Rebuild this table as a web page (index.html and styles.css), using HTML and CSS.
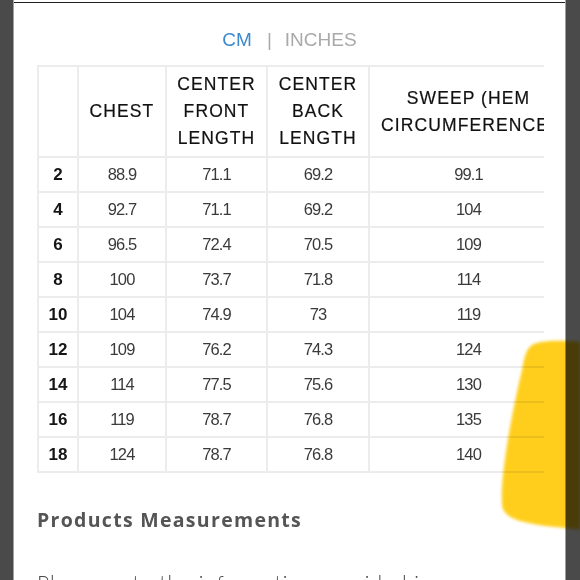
FILE: index.html
```html
<!DOCTYPE html>
<html>
<head>
<meta charset="utf-8">
<link rel="stylesheet" href="styles.css">
</head>
<body>
<div class="panel">
  <div class="topline"></div>
  <div class="units"><span class="cm">CM</span><span class="sep">|</span><span class="inches">INCHES</span></div>
  <div class="table-wrap">
    <table class="size-table">
      <colgroup>
        <col class="c0"><col class="c1"><col class="c2"><col class="c3"><col class="c4">
      </colgroup>
      <thead>
        <tr>
          <th></th>
          <th>CHEST</th>
          <th>CENTER<br>FRONT<br>LENGTH</th>
          <th>CENTER<br>BACK<br>LENGTH</th>
          <th>SWEEP (HEM<br>CIRCUMFERENCE)</th>
        </tr>
      </thead>
      <tbody>
        <tr><td class="size">2</td><td>88.9</td><td>71.1</td><td>69.2</td><td>99.1</td></tr>
        <tr><td class="size">4</td><td>92.7</td><td>71.1</td><td>69.2</td><td>104</td></tr>
        <tr><td class="size">6</td><td>96.5</td><td>72.4</td><td>70.5</td><td>109</td></tr>
        <tr><td class="size">8</td><td>100</td><td>73.7</td><td>71.8</td><td>114</td></tr>
        <tr><td class="size">10</td><td>104</td><td>74.9</td><td>73</td><td>119</td></tr>
        <tr><td class="size">12</td><td>109</td><td>76.2</td><td>74.3</td><td>124</td></tr>
        <tr><td class="size">14</td><td>114</td><td>77.5</td><td>75.6</td><td>130</td></tr>
        <tr><td class="size">16</td><td>119</td><td>78.7</td><td>76.8</td><td>135</td></tr>
        <tr><td class="size">18</td><td>124</td><td>78.7</td><td>76.8</td><td>140</td></tr>
      </tbody>
    </table>
  </div>
  <h2 class="heading">Products Measurements</h2>
  <p class="note">Please note the information provided is</p>
</div>
<svg class="highlight" width="90" height="210" viewBox="0 0 90 210">
  <path d="M40 17 C45 10 70 10 95 12 L95 200 L55 196 C30 192 13 188 12 175 C10 150 20 90 32 40 C34 28 36 20 40 17 Z" fill="#ffcc10"/>
</svg>
</body>
</html>
```
FILE: styles.css
```css
html, body {
  margin: 0;
  padding: 0;
  height: 580px;
  overflow: hidden;
}
body {
  background: #4a4a4a;
  position: relative;
}
.panel {
  margin: 0 15px 0 14px;
  background: #ffffff;
  height: 580px;
  box-shadow: -1px 0 0 #a0a0a0, 1px 0 0 #a0a0a0;
  overflow: hidden;
}
.topline {
  height: 2px;
  border-bottom: 1px solid #1e1e1e;
}
.units {
  padding-top: 25px;
  height: 24px;
  line-height: 24px;
  text-align: center;
  font-family: "Liberation Sans", Arial, sans-serif;
  font-size: 19px;
}
.cm { color: #3d89cc; }
.sep { color: #a9a9a9; margin: 0 13px 0 15px; }
.inches { color: #a9a9a9; }
.table-wrap {
  margin: 13px 0 0 23px;
  width: 507px;
  overflow: hidden;
}
.size-table {
  border-collapse: collapse;
  table-layout: fixed;
  width: 530px;
  font-family: "Liberation Sans", Arial, sans-serif;
}
.c0 { width: 40px; }
.c1 { width: 88px; }
.c2 { width: 101px; }
.c3 { width: 102px; }
.c4 { width: 199px; }
.size-table th,
.size-table td {
  border: 2px solid #ececec;
  text-align: center;
  vertical-align: middle;
  padding: 0;
}
.size-table th {
  height: 89px;
  font-size: 17.5px;
  font-weight: normal;
  letter-spacing: 1.1px;
  line-height: 27px;
  color: #111111;
  white-space: nowrap;
  -webkit-text-stroke: 0.2px #111111;
}
.size-table td {
  height: 33px;
  font-size: 16.5px;
  letter-spacing: -0.9px;
  color: #3a3a3a;
}
.size-table td.size {
  font-size: 17px;
  font-weight: bold;
  color: #151515;
  letter-spacing: 0;
}
.heading {
  margin: 34px 0 0 23px;
  font-family: "Open Sans", "Lato", sans-serif;
  font-weight: 700;
  font-size: 19.5px;
  letter-spacing: 1.3px;
  line-height: 26px;
  color: #555555;
}
.note {
  margin: 35px 0 0 23px;
  font-family: "Lato", "Open Sans", sans-serif;
  font-weight: 300;
  font-size: 21px;
  letter-spacing: 1px;
  line-height: 30px;
  color: #4a4a4a;
  white-space: nowrap;
}
.highlight {
  position: absolute;
  left: 490px;
  top: 330px;
  mix-blend-mode: multiply;
  filter: blur(1.5px);
  opacity: 0.95;
}
```
